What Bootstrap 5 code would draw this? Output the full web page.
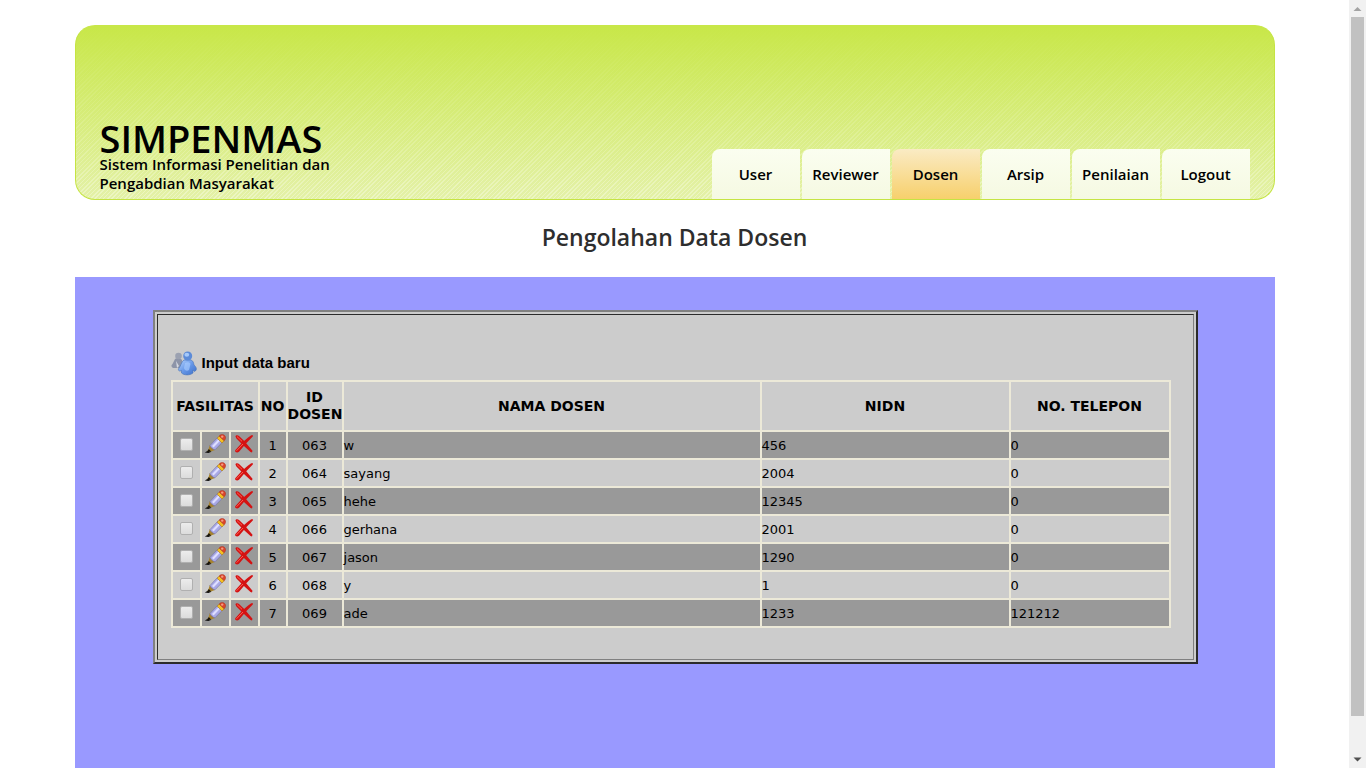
<!DOCTYPE html>
<html lang="id">
<head>
<meta charset="utf-8">
<meta name="viewport" content="width=device-width, initial-scale=1">
<title>SIMPENMAS - Pengolahan Data Dosen</title>
<link rel="stylesheet" href="https://cdn.jsdelivr.net/npm/bootstrap@5.3.0/dist/css/bootstrap.min.css">
<style>
  body { font-family: "DejaVu Sans", Verdana, sans-serif; font-size: 13px; color: #000; background: #fff; }
  .site { max-width: 1200px; padding-top: 25px; }
  .masthead {
    min-height: 175px; padding: 0 24px; border-radius: 20px; overflow: hidden;
    border: 1px solid #c5e443; border-top-color: #c8e748;
    background: linear-gradient(#c8e748, rgba(200,231,72,0)), repeating-linear-gradient(135deg, #edf6c4 0 1px, #e4f1a8 1px 3px);
  }
  .brand { font-family: "Open Sans", sans-serif; font-weight: 600; padding-bottom: 6px; }
  .brand h1 { font-size: 38px; line-height: 34px; font-weight: 600; }
  .brand p { font-size: 15px; line-height: 19px; width: 256px; }
  .tabs { gap: 2px; }
  .tabs .nav-link {
    width: 88px; height: 50px; padding: 0; line-height: 50px; text-align: center; white-space: nowrap;
    font-family: "Open Sans", sans-serif; font-size: 15px; font-weight: 600; color: #000;
    border-radius: 8px 0 0 0; background: linear-gradient(#fbfef0, #f5f9e2);
  }
  .tabs .nav-link.active { background: linear-gradient(#faebc4, #f7d06c); }
  .page-title { font-family: "Open Sans", sans-serif; font-size: 23px; line-height: 30px; font-weight: 600; color: #2e2e2e; padding: 22px 0 25px; }
  .panel { background: #99f; padding: 33px 77px 0 78px; }
  .frame { border: 2px solid; border-color: #808080 #2b2b2b #2b2b2b #808080; background: #ccc; padding: 2px; }
  .frame-inner { border: 1px solid; border-color: #2b2b2b #808080 #808080 #2b2b2b; padding: 35px 22px 31px 13px; }
  .add-link { gap: 5px; font-family: "Liberation Sans", Arial, sans-serif; font-size: 15px; line-height: 26px; font-weight: 700; color: #000; margin-bottom: 4px; }
  .data { border-collapse: collapse; table-layout: fixed; width: 100%; line-height: 17px; }
  .data th, .data td { border: 2px solid #ece9d8; padding: 0; }
  .data th { height: 50px; font-size: 14px; text-align: center; vertical-align: middle; }
  .data td { height: 28px; vertical-align: middle; }
  .data tbody tr:nth-child(odd) { background: #999; }
  .data svg { display: block; margin: 0 auto 2px; }
  .data button { display: block; width: 100%; border: 0; padding: 0; background: none; }
  .pick { appearance: none; display: block; width: 13px; height: 13px; margin: 0 auto 2px; border: 1px solid #b0b0b0; border-radius: 2px; background: linear-gradient(#ececec, #dcdcdc); }
  .c-tool { width: 29px; } .c-no { width: 28px; } .c-id { width: 56px; } .c-nidn { width: 249px; } .c-tel { width: 160px; }
  .scroller { width: 17px; background: #f1f1f1; padding: 0 2px; }
  .scroller svg { width: 13px; height: 17px; }
  .scroller .thumb { height: 91%; background: #c1c1c1; }
</style>
</head>
<body>
<svg class="d-none" aria-hidden="true">
  <defs>
    <symbol id="pencil" viewBox="0 0 22 20">
      <path d="M.8 18.600 4.500 16.300 7.500 17.800 4.500 19Z" fill="#111"/>
      <path d="M5.800 11 11 16 5.500 18 3.300 17.300 4.600 15Z" fill="#a8842e"/>
      <path d="M3 18.300 4.800 15 7.200 17.500Z" fill="#15120a"/>
      <path d="M6 11.500 13.500 3.500 18.300 8.300 11 15.800C9 15.500 6.500 13.500 6 11.500Z" fill="#a9a9e6" stroke="#6e6ea6" stroke-width=".6"/>
      <path d="M8 12 14.500 5.200 16 6.700 9.600 13.500Z" fill="#dedeff"/>
      <path d="M13.200 4.200 15.200 2 20.200 6.700 18 9Z" fill="#f5c022" stroke="#a9781b" stroke-width=".6"/>
      <path d="M15.200 2C16.800.2 19.500.3 20.600 1.500 22.200 3.200 21.600 5.300 20.200 6.700Z" fill="#dc452c" stroke="#a62c1c" stroke-width=".5"/>
      <circle cx="18.200" cy="2.600" r="1.200" fill="#f59a80"/>
    </symbol>
    <symbol id="cross" viewBox="0 0 20 20">
      <path d="M1.500 2.500C1.500.8 4 .8 5 2L10.500 7.300 18.500 16.800 18 18.500 16.500 18 8.300 10.500 2.200 4.300Z" fill="#d41212"/>
      <path d="M17.200 1.300 19 1.200 18.800 2.500 12 9.600 5 17.800C3.500 19.300.6 18.500 1.200 16.300L8 8.800 13.500 4Z" fill="#d41212"/>
      <path d="M2.500 16.800 9 10M3 2.600 8 7.300" stroke="#ff5c50" stroke-width="1"/>
    </symbol>
  </defs>
</svg>
<div class="d-flex vh-100 overflow-hidden">
  <div class="flex-grow-1 d-flex flex-column overflow-hidden">
    <div class="site w-100 mx-auto d-flex flex-column flex-grow-1">
      <header class="masthead d-flex justify-content-between align-items-end">
        <div class="brand">
          <h1 class="m-0">SIMPENMAS</h1>
          <p class="m-0">Sistem Informasi Penelitian dan Pengabdian Masyarakat</p>
        </div>
        <nav class="nav tabs flex-nowrap" aria-label="Menu utama">
          <a class="nav-link" href="#user">User</a>
          <a class="nav-link" href="#reviewer">Reviewer</a>
          <a class="nav-link active" aria-current="page" href="#dosen">Dosen</a>
          <a class="nav-link" href="#arsip">Arsip</a>
          <a class="nav-link" href="#penilaian">Penilaian</a>
          <a class="nav-link" href="#logout">Logout</a>
        </nav>
      </header>
      <h2 class="page-title text-center m-0">Pengolahan Data Dosen</h2>
      <main class="panel flex-grow-1">
        <div class="frame"><div class="frame-inner">
          <a class="add-link d-flex align-items-center text-decoration-none" href="#tambah">
            <svg width="26" height="26" viewBox="0 0 26 26" aria-hidden="true">
              <defs><linearGradient id="body1" x1="0" y1="0" x2="1" y2="1"><stop offset="0" stop-color="#b5d3ff"/><stop offset=".5" stop-color="#6798e8"/><stop offset="1" stop-color="#3d6fc8"/></linearGradient></defs>
              <g fill="#8d94a8"><path d="M4 9C5 8 10 8 11 10L12 16 9 18 2 18C0 17 0 15 1.500 14Z"/><circle cx="7.500" cy="6" r="3.300" fill="#9ba1b1"/></g>
              <path d="M5 11 8 16 6 18Z" fill="#d4d8e2"/>
              <path d="M13 10H20C22.500 11 22.500 13 23 15 25.500 17 26.500 20 23.500 21.500L22 20V23C19 25.500 13 25.500 10.500 23L10.500 20.500C8 22 6.500 20 8 18 10 16 10 12 13 10Z" fill="url(#body1)" stroke="#4773b8" stroke-width=".6"/>
              <circle cx="16.700" cy="6" r="4.500" fill="#5c8bd8"/><ellipse cx="15.800" cy="4.700" rx="2.400" ry="2" fill="#a5c9fa"/>
              <path d="M14 13C16 11.500 19 12 19.500 14L18 20C16 21.500 13.500 20.500 13 18Z" fill="#a9ccff" opacity=".65"/>
            </svg>
            <span>Input data baru</span>
          </a>
          <table class="data">
            <colgroup><col class="c-tool"><col class="c-tool"><col class="c-tool"><col class="c-no"><col class="c-id"><col><col class="c-nidn"><col class="c-tel"></colgroup>
            <thead><tr><th colspan="3" scope="col">FASILITAS</th><th scope="col">NO</th><th scope="col">ID DOSEN</th><th scope="col">NAMA DOSEN</th><th scope="col">NIDN</th><th scope="col">NO. TELEPON</th></tr></thead>
            <tbody id="rows"></tbody>
          </table>
        </div></div>
      </main>
    </div>
  </div>
  <div class="scroller d-flex flex-column flex-shrink-0" aria-hidden="true">
    <svg viewBox="0 0 13 17"><path d="M2.500 11 6.500 7 10.500 11Z" fill="#a3a3a3"/></svg>
    <div class="thumb"></div>
    <svg class="mt-auto" viewBox="0 0 13 17"><path d="M2.500 6.500 10.500 6.500 6.500 10.500Z" fill="#505050"/></svg>
  </div>
</div>
<script>
  const dosen = [
    ["063", "w", "456", "0"],
    ["064", "sayang", "2004", "0"],
    ["065", "hehe", "12345", "0"],
    ["066", "gerhana", "2001", "0"],
    ["067", "jason", "1290", "0"],
    ["068", "y", "1", "0"],
    ["069", "ade", "1233", "121212"]
  ];
  document.getElementById("rows").innerHTML = dosen.map(([id, nama, nidn, tel], i) => `
    <tr>
      <td><input class="pick" type="checkbox" aria-label="Pilih ${nama}"></td>
      <td><button type="button" aria-label="Ubah ${nama}"><svg width="22" height="20"><use href="#pencil"/></svg></button></td>
      <td><button type="button" aria-label="Hapus ${nama}"><svg width="20" height="20"><use href="#cross"/></svg></button></td>
      <td class="text-center">${i + 1}</td><td class="text-center">${id}</td>
      <td>${nama}</td><td>${nidn}</td><td>${tel}</td>
    </tr>`).join("");
</script>
<script src="https://cdn.jsdelivr.net/npm/bootstrap@5.3.0/dist/js/bootstrap.bundle.min.js"></script>
</body>
</html>
